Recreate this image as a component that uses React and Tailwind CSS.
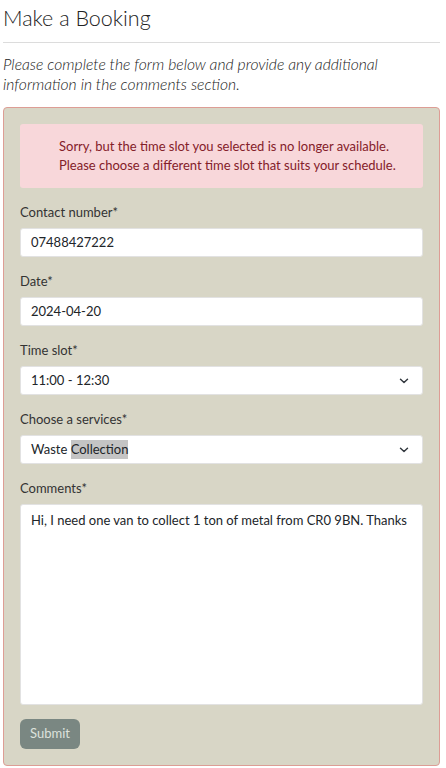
import React from "react";

function Chevron() {
  return (
    <svg width="10" height="7" viewBox="0 0 10 7" className="absolute right-[13px] top-1/2 -translate-y-1/2">
      <path d="M1.5 1.8 L5 5 L8.5 1.8" fill="none" stroke="#343a40" strokeWidth="1.5" strokeLinecap="round" strokeLinejoin="round" />
    </svg>
  );
}

function Label({ children }) {
  return <div className="h-[20px] leading-[20px] text-[13px] text-[#333] mb-[6px]">{children}</div>;
}

function Field({ children }) {
  return (
    <div className="h-[29px] bg-white rounded-[3px] border border-[#e2e2e2] flex items-center pl-[10px] text-[13px] text-[#212529] relative">
      {children}
    </div>
  );
}

export default function App() {
  return (
    <div className="w-[446px] min-h-[768px] bg-white" style={{ fontFamily: 'Lato, sans-serif' }}>
      <div className="mx-[3px] w-[437px]">
        <h1 className="pt-[3px] h-[42px] text-[21.5px] font-light leading-[30px] text-[#222]">Make a Booking</h1>
        <div className="h-px bg-[#dcdcdc]"></div>
        <p className="mt-[11px] text-[15.7px] italic font-light leading-[20px] text-[#222]">
          Please complete the form below and provide any additional information in the comments section.
        </p>
        <div className="mt-[13px] border border-[#dd9d95] rounded-[4px] bg-[#d8d6c6] p-4">
          <div className="h-[64px] bg-[#f8d7da] rounded-[3px] text-[13px] leading-[19px] text-[#842029] flex flex-col justify-center pl-[39px]">
            <div>Sorry, but the time slot you selected is no longer available.</div>
            <div>Please choose a different time slot that suits your schedule.</div>
          </div>
          <div className="mt-[14px]">
            <Label>Contact number*</Label>
            <Field>07488427222</Field>
          </div>
          <div className="mt-[14px]">
            <Label>Date*</Label>
            <Field>2024-04-20</Field>
          </div>
          <div className="mt-[14px]">
            <Label>Time slot*</Label>
            <Field>
              11:00 - 12:30
              <Chevron />
            </Field>
          </div>
          <div className="mt-[14px]">
            <Label>Choose a services*</Label>
            <Field>
              Waste&nbsp;<span className="bg-[#c4c4c4] leading-[19px]">Collection</span>
              <Chevron />
            </Field>
          </div>
          <div className="mt-[14px]">
            <Label>Comments*</Label>
            <div className="h-[201px] bg-white rounded-[3px] border border-[#e2e2e2] px-[10px] pt-[5px] text-[13px] leading-[20px] text-[#212529]">
              Hi, I need one van to collect 1 ton of metal from CR0 9BN. Thanks
            </div>
          </div>
          <button className="block mt-[14px] h-[30px] w-[60px] rounded-[6px] bg-[#7a8782] text-[13px] text-[#dde2dd]">
            Submit
          </button>
        </div>
      </div>
    </div>
  );
}
